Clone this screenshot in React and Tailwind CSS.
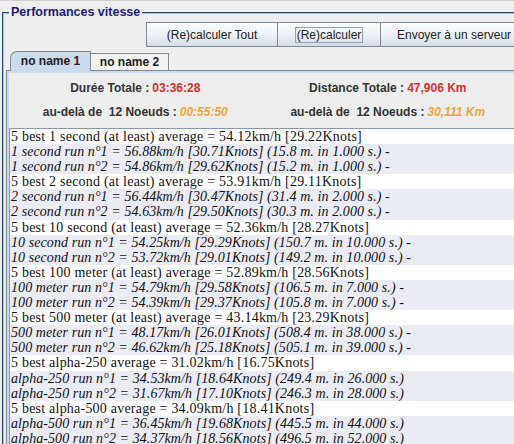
import React from 'react';

const LINES = [
    [false, '5 best 1 second (at least) average = 54.12km/h [29.22Knots]'],
    [true, '1 second run n°1 = 56.88km/h [30.71Knots] (15.8 m. in 1.000 s.) -'],
    [true, '1 second run n°2 = 54.86km/h [29.62Knots] (15.2 m. in 1.000 s.) -'],
    [false, '5 best 2 second (at least) average = 53.91km/h [29.11Knots]'],
    [true, '2 second run n°1 = 56.44km/h [30.47Knots] (31.4 m. in 2.000 s.) -'],
    [true, '2 second run n°2 = 54.63km/h [29.50Knots] (30.3 m. in 2.000 s.) -'],
    [false, '5 best 10 second (at least) average = 52.36km/h [28.27Knots]'],
    [true, '10 second run n°1 = 54.25km/h [29.29Knots] (150.7 m. in 10.000 s.) -'],
    [true, '10 second run n°2 = 53.72km/h [29.01Knots] (149.2 m. in 10.000 s.) -'],
    [false, '5 best 100 meter (at least) average = 52.89km/h [28.56Knots]'],
    [true, '100 meter run n°1 = 54.79km/h [29.58Knots] (106.5 m. in 7.000 s.) -'],
    [true, '100 meter run n°2 = 54.39km/h [29.37Knots] (105.8 m. in 7.000 s.) -'],
    [false, '5 best 500 meter (at least) average = 43.14km/h [23.29Knots]'],
    [true, '500 meter run n°1 = 48.17km/h [26.01Knots] (508.4 m. in 38.000 s.) -'],
    [true, '500 meter run n°2 = 46.62km/h [25.18Knots] (505.1 m. in 39.000 s.) -'],
    [false, '5 best alpha-250 average = 31.02km/h [16.75Knots]'],
    [true, 'alpha-250 run n°1 = 34.53km/h [18.64Knots] (249.4 m. in 26.000 s.)'],
    [true, 'alpha-250 run n°2 = 31.67km/h [17.10Knots] (246.3 m. in 28.000 s.)'],
    [false, '5 best alpha-500 average = 34.09km/h [18.41Knots]'],
    [true, 'alpha-500 run n°1 = 36.45km/h [19.68Knots] (445.5 m. in 44.000 s.)'],
    [true, 'alpha-500 run n°2 = 34.37km/h [18.56Knots] (496.5 m. in 52.000 s.)'],
];

function Btn({ children, focus, className = '' }) {
    return (
        <div className={`h-[25px] flex items-center justify-center border border-[#7a8a99] bg-gradient-to-b from-[#fbfcfd] via-[#eef2f6] to-[#d3dde8] text-[12px] text-[#222] whitespace-nowrap ${className}`}>
            <span className={focus ? 'border border-[#8ea3b8] px-[1px] leading-[14px]' : ''}>{children}</span>
        </div>
    );
}

function Stat({ label, value, italic }) {
    return (
        <div className="flex justify-center items-center h-[24px] text-[12px] font-bold text-[#333] whitespace-pre">
            <span>{label}</span>
            <span className={italic ? 'italic text-[#f0a53a] ml-[3px]' : 'text-[#d33030] ml-[3px]'}>{value}</span>
        </div>
    );
}

export default function App() {
    return (
        <div className="w-[514px] h-[444px] overflow-hidden bg-[#eeeeee] font-['Liberation_Sans',Arial,sans-serif] border-t border-[#cfcfcf]">
            <div className="pt-[11px] pl-[2px]">
                {/* titled border */}
                <div className="relative border-l border-t border-[#1f4b78] h-[440px]">
                    <span className="absolute -top-[9px] left-[6px] bg-[#eeeeee] px-[2px] text-[12.5px] leading-[16px] font-bold text-[#1c1c7a]">
                        Performances vitesse
                    </span>
                    <div className="border-l border-t border-[#a9c0d6] h-full">
                        {/* buttons */}
                        <div className="flex pt-[8px] pl-[142px]">
                            <Btn className="w-[132px] shrink-0">(Re)calculer Tout</Btn>
                            <Btn className="w-[104px] shrink-0 -ml-px" focus>(Re)calculer</Btn>
                            <Btn className="w-[160px] shrink-0 -ml-px justify-start pl-[16px]">Envoyer à un serveur</Btn>
                        </div>

                        {/* tabs */}
                        <div className="flex pl-[6px] mt-[3px] h-[20px] items-end">
                            <div className="h-[20px] w-[81px] flex items-center justify-center border border-b-0 border-[#8a8a8a] rounded-tl-[7px] bg-[#c9dbed] text-[12px] font-bold text-[#222] relative z-10 -mb-px pb-px">
                                no name 1
                            </div>
                            <div className="h-[17px] w-[78px] flex items-center justify-center border border-l-0 border-b-0 border-[#8a8a8a] bg-[#f3f3f3] text-[12px] font-bold text-[#222]">
                                no name 2
                            </div>
                        </div>

                        {/* tab content */}
                        <div className="ml-[2px] border-l border-t border-[#8a8a8a] h-full">
                            <div className="border-l-2 border-t-2 border-[#c9dbed] h-full">
                                <div className="grid grid-cols-2 pt-[3px] pb-[4px]">
                                    <Stat label="Durée Totale :" value="03:36:28" />
                                    <Stat label="Distance Totale :" value="47,906 Km" />
                                    <Stat label="au-delà de  12 Noeuds :" value="00:55:50" italic />
                                    <Stat label="au-delà de  12 Noeuds :" value="30,111 Km" italic />
                                </div>
                                <div className="border-l border-t border-[#8a99aa] bg-white font-['Liberation_Serif','Times_New_Roman',serif] text-[14px] text-[#111] h-full">
                                    {LINES.map(([it, txt], i) => (
                                        <div
                                            key={i}
                                            className={`h-[15.1px] leading-[15.1px] pl-[1px] whitespace-nowrap ${it ? 'italic tracking-[0.08px] bg-[#ececf6]' : 'tracking-[0.22px] bg-white'}`}
                                        >
                                            {txt}
                                        </div>
                                    ))}
                                </div>
                            </div>
                        </div>
                    </div>
                </div>
            </div>
        </div>
    );
}
